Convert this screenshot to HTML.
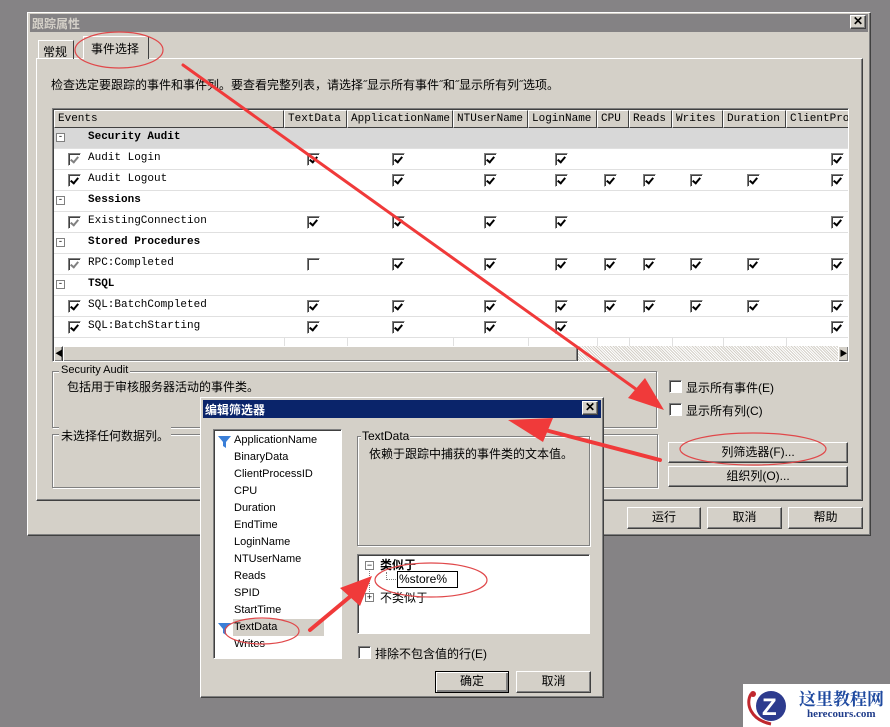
<!DOCTYPE html>
<html><head><meta charset="utf-8">
<style>
*{box-sizing:border-box;margin:0;padding:0}
body{width:890px;height:727px;background:#858385;position:relative;overflow:hidden;font-family:"Liberation Sans","Noto Sans CJK SC",sans-serif;font-size:12px;color:#000}
.a{position:absolute}
.raised{background:#d4d0c8;border:1px solid;border-color:#fff #404040 #404040 #fff;box-shadow:inset -1px -1px 0 #808080}
.sunk{border:1px solid;border-color:#808080 #fff #fff #808080;box-shadow:inset 1px 1px 0 #404040}
.grp{border:1px solid #808080;box-shadow:1px 1px 0 #fff, inset 1px 1px 0 #fff}
.gl{position:absolute;top:-8px;left:6px;background:#d4d0c8;padding:0 2px;font-size:12px}
.btn{position:absolute;background:#d4d0c8;border:1px solid;border-color:#fff #404040 #404040 #fff;box-shadow:inset -1px -1px 0 #808080;text-align:center;font-size:12px}
.mono{font-family:"Liberation Mono","Noto Sans CJK SC",monospace;font-size:11px}
.hd{position:absolute;top:0;height:18px;background:#d4d0c8;border:1px solid;border-color:#fff #404040 #404040 #fff;padding:2px 3px;white-space:nowrap;overflow:hidden}
.cb{position:absolute;width:13px;height:13px;background:#fff;border:1px solid;border-color:#808080 #fff #fff #808080;box-shadow:inset 1px 1px 0 #404040}
.cb.c::after{content:"";position:absolute;left:3px;top:1px;width:3px;height:6px;border:solid #000;border-width:0 2px 2px 0;transform:rotate(40deg)}
.cb.g::after{border-color:#808080}
.row{position:absolute;left:0;width:796px;height:21px;border-bottom:1px solid #e0e0e0}
.vl{position:absolute;top:18px;width:1px;height:218px;background:#e0e0e0}
.li{position:absolute;left:20px;font-size:11px;color:#000}
</style></head><body>

<div class="a raised" style="left:27px;top:12px;width:844px;height:524px"></div>
<div class="a" style="left:30px;top:14px;width:838px;height:18px;background:#848284;color:#d4d0c8;font-weight:bold;font-size:12px;padding:1px 2px">跟踪属性</div>
<div class="btn" style="left:850px;top:15px;width:16px;height:14px;font-size:12px;line-height:11px;font-weight:bold">✕</div>

<div class="a" style="left:36px;top:58px;width:827px;height:443px;border:1px solid;border-color:#fff #404040 #404040 #fff;box-shadow:inset -1px -1px 0 #808080"></div>
<div class="a" style="left:38px;top:40px;width:36px;height:19px;border:1px solid;border-color:#fff #404040 transparent #fff;border-bottom:none;padding:2px 4px;font-size:12px">常规</div>
<div class="a" style="left:83px;top:36px;width:66px;height:23px;background:#d4d0c8;border:1px solid;border-color:#fff #404040 transparent #fff;border-bottom:none;padding:3px 7px;font-size:12px">事件选择</div>

<div class="a" style="left:51px;top:76px;font-size:12px">检查选定要跟踪的事件和事件列。要查看完整列表，请选择˝显示所有事件˝和˝显示所有列˝选项。</div>

<div class="a sunk" style="left:52px;top:108px;width:797px;height:254px;background:#fff;overflow:hidden">
 <div class="a mono" style="left:1px;top:1px;width:795px;height:237px" id="g">
  <div class="hd" style="left:0;width:230px">Events</div>
  <div class="hd" style="left:230px;width:63px">TextData</div>
  <div class="hd" style="left:293px;width:106px">ApplicationName</div>
  <div class="hd" style="left:399px;width:75px">NTUserName</div>
  <div class="hd" style="left:474px;width:69px">LoginName</div>
  <div class="hd" style="left:543px;width:32px">CPU</div>
  <div class="hd" style="left:575px;width:43px">Reads</div>
  <div class="hd" style="left:618px;width:51px">Writes</div>
  <div class="hd" style="left:669px;width:63px">Duration</div>
  <div class="hd" style="left:732px;width:64px">ClientProc</div>
 </div>
 <div class="a" style="left:1px;top:237px;width:795px;height:16px;background:#ecebe8;background-image:repeating-linear-gradient(45deg,#d4d0c8 0 1px,#fff 1px 2px)"></div>
 <div class="btn" style="left:1px;top:237px;width:9px;height:16px;font-size:8px;line-height:14px">◀</div>
 <div class="btn" style="left:10px;top:237px;width:515px;height:16px"></div>
 <div class="btn" style="left:785px;top:237px;width:11px;height:16px;font-size:8px;line-height:14px">▶</div>
</div>

<div class="a grp" style="left:52px;top:371px;width:605px;height:57px"><span class="gl" style="font-size:11px">Security Audit</span><div class="a" style="left:14px;top:6px">包括用于审核服务器活动的事件类。</div></div>
<div class="a grp" style="left:52px;top:434px;width:606px;height:54px"><span class="gl">未选择任何数据列。</span></div>

<div class="cb" style="left:669px;top:380px"></div><div class="a" style="left:686px;top:379px">显示所有事件(E)</div>
<div class="cb" style="left:669px;top:403px"></div><div class="a" style="left:686px;top:402px">显示所有列(C)</div>
<div class="btn" style="left:668px;top:442px;width:180px;height:21px;line-height:18px">列筛选器(F)...</div>
<div class="btn" style="left:668px;top:466px;width:180px;height:21px;line-height:18px">组织列(O)...</div>

<div class="btn" style="left:627px;top:507px;width:74px;height:22px;line-height:19px">运行</div>
<div class="btn" style="left:707px;top:507px;width:75px;height:22px;line-height:19px">取消</div>
<div class="btn" style="left:788px;top:507px;width:75px;height:22px;line-height:19px">帮助</div>

<div class="a raised" style="left:200px;top:397px;width:404px;height:301px"></div>
<div class="a" style="left:203px;top:400px;width:398px;height:18px;background:#0a246a;color:#fff;font-weight:bold;padding:1px 2px">编辑筛选器</div>
<div class="btn" style="left:582px;top:401px;width:16px;height:14px;line-height:11px;font-weight:bold">✕</div>

<div class="a sunk" style="left:213px;top:429px;width:129px;height:230px;background:#fff">
 <div class="a" style="left:19px;top:189px;width:91px;height:17px;background:#d4d0c8"></div>
</div>
<div class="a" style="left:214px;top:430px;width:127px;height:228px" id="lst"></div>

<div class="a grp" style="left:357px;top:436px;width:233px;height:110px"><span class="gl" style="left:3px;padding:0 1px">TextData</span><div class="a" style="left:11px;top:8px">依赖于跟踪中捕获的事件类的文本值。</div></div>

<div class="a sunk" style="left:357px;top:554px;width:233px;height:80px;background:#fff">
 <div class="a" style="left:7px;top:6px;width:9px;height:9px;border:1px solid #808080;font-size:9px;line-height:6px;text-align:center">−</div>
 <div class="a" style="left:11px;top:16px;width:1px;height:25px;border-left:1px dotted #808080"></div>
 <div class="a" style="left:28px;top:17px;width:1px;height:8px;border-left:1px dotted #808080"></div>
 <div class="a" style="left:28px;top:24px;width:10px;border-top:1px dotted #808080"></div>
 <div class="a" style="left:22px;top:1px;font-weight:bold">类似于</div>
 <div class="a" style="left:39px;top:16px;width:61px;height:17px;border:1px solid #000;padding:0 1px;font-size:12px">%store%</div>
 <div class="a" style="left:7px;top:38px;width:9px;height:9px;border:1px solid #808080;font-size:9px;line-height:7px;text-align:center;background:#fff">+</div>
 <div class="a" style="left:22px;top:34px">不类似于</div>
</div>
<div class="cb" style="left:358px;top:646px"></div><div class="a" style="left:375px;top:645px">排除不包含值的行(E)</div>
<div class="btn" style="left:435px;top:671px;width:74px;height:22px;line-height:19px;border:1px solid #000;box-shadow:inset 1px 1px 0 #fff,inset -2px -2px 0 #808080">确定</div>
<div class="btn" style="left:516px;top:671px;width:75px;height:22px;line-height:19px">取消</div>

<div class="a" style="left:743px;top:684px;width:147px;height:43px;background:#fff">
 <svg class="a" style="left:2px;top:2px" width="50" height="40"><path d="M6 8 C0 18 6 34 26 38" stroke="#c0282e" stroke-width="3" fill="none"/><circle cx="8" cy="8" r="3" fill="#c0282e"/><circle cx="26" cy="20" r="15" fill="#2d3b8e"/><text x="17" y="29" font-family="Liberation Sans" font-weight="bold" font-size="24" fill="#fff">Z</text></svg>
 <div class="a" style="left:56px;top:1px;color:#1f4aa0;font-weight:bold;font-size:17px;font-family:'Noto Serif CJK SC',serif">这里教程网</div>
 <div class="a" style="left:64px;top:24px;color:#1f3c8a;font-weight:bold;font-size:11px;font-family:'Liberation Serif',serif">herecours.com</div>
</div>

<svg class="a" style="left:0;top:0" width="890" height="727">
 <g fill="none" stroke="#e0484a" stroke-width="1.2">
  <ellipse cx="119" cy="50" rx="44" ry="18"/>
  <ellipse cx="753" cy="449" rx="73" ry="16"/>
  <ellipse cx="431" cy="580" rx="56" ry="17"/>
  <ellipse cx="262" cy="631" rx="37" ry="13"/>
 </g>
 <g stroke="#f03a3a" stroke-linecap="round">
  <line x1="183" y1="65" x2="640" y2="392" stroke-width="3"/>
  <line x1="660" y1="460" x2="545" y2="430" stroke-width="4"/>
  <line x1="310" y1="630" x2="352" y2="595" stroke-width="4"/>
 </g>
 <g fill="#f03a3a">
  <polygon points="664,410 628,398 645,378"/>
  <polygon points="508,420 553,418 543,442"/>
  <polygon points="372,576 340,588 360,606"/>
 </g>
</svg>

<script>
var g=document.getElementById('g');
var rows=[
 ['gS','Security Audit'],
 ['g','Audit Login',[1,1,1,1,0,0,0,0,1]],
 ['c','Audit Logout',[0,1,1,1,1,1,1,1,1]],
 ['gH','Sessions'],
 ['g','ExistingConnection',[1,1,1,1,0,0,0,0,1]],
 ['gH','Stored Procedures'],
 ['g','RPC:Completed',[2,1,1,1,1,1,1,1,1]],
 ['gH','TSQL'],
 ['c','SQL:BatchCompleted',[1,1,1,1,1,1,1,1,1]],
 ['c','SQL:BatchStarting',[1,1,1,1,0,0,0,0,1]]];
var h='';
[230,293,399,474,543,575,618,669,732].forEach(function(x){h+='<div class="vl" style="left:'+x+'px"></div>';});
rows.forEach(function(r,i){
 var t=18+i*21;
 var bg=r[0]=='gS'?'#d8d8d8':'#fff';
 h+='<div class="row" style="top:'+t+'px;background:'+bg+'">';
 if(r[0][0]=='g'&&r.length==2){
  h+='<div class="a" style="left:2px;top:5px;width:9px;height:9px;border:1px solid #808080;background:#fff;font-size:9px;line-height:6px;text-align:center">-</div>';
  h+='<div class="a" style="left:34px;top:3px;font-weight:bold">'+r[1]+'</div>';
 }else{
  h+='<div class="cb c '+(r[0]=='g'?'g':'')+'" style="left:14px;top:4px"></div><div class="a" style="left:34px;top:3px">'+r[1]+'</div>';
  r[2].forEach(function(v,j){if(v){var x=[260,345,437,508,557,596,643,700,784][j];h+='<div class="cb '+(v==1?'c':'')+'" style="left:'+(x-7)+'px;top:4px"></div>';}});
 }
 h+='</div>';
});
g.insertAdjacentHTML('afterbegin',h);
var L=['ApplicationName','BinaryData','ClientProcessID','CPU','Duration','EndTime','LoginName','NTUserName','Reads','SPID','StartTime','TextData','Writes'];
var s='';
L.forEach(function(n,i){s+='<div class="li" style="top:'+(4+i*17)+'px">'+n+'</div>';
 if(i==0||i==11)s+='<svg class="a" style="left:4px;top:'+(5+i*17)+'px" width="14" height="14"><path d="M0 1 H13 L8 7 V13 L5 11 V7 Z" fill="#3a7fd8"/></svg>';});
document.getElementById('lst').innerHTML=s;
</script>
</body></html>
